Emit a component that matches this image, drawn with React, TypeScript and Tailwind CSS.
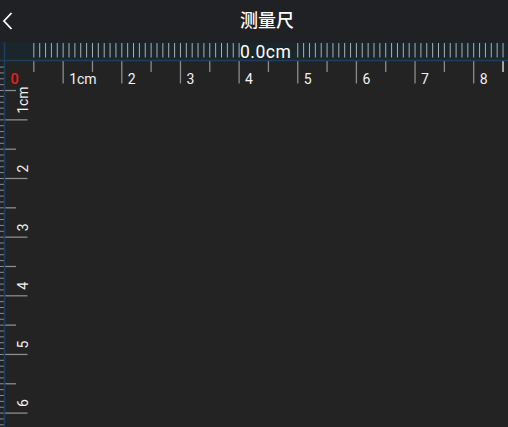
import React from 'react';

const CM = 58.65;
const OX = 4.5; // x of the zero line
const OY = 61.2; // y of the zero line
const W = 508;
const H = 427;

const font = 'Roboto, "Noto Sans CJK SC", sans-serif';

function Ruler() {
  const mmTop: number[] = [];
  for (let i = 5; OX + i * CM / 10 < W; i++) mmTop.push(OX + (i * CM) / 10);

  const mmLeft: number[] = [];
  for (let i = 1; OY + i * CM / 10 < H; i++) mmLeft.push(OY + (i * CM) / 10);

  const cmTop: number[] = [];
  for (let i = 1; OX + i * CM / 2 < W; i++) cmTop.push(i);
  const cmLeft: number[] = [];
  for (let i = 1; OY + i * CM / 2 < H; i++) cmLeft.push(i);

  return (
    <svg
      width={W}
      height={H - 42}
      viewBox={`0 42 ${W} ${H - 42}`}
      className="block"
      style={{ fontFamily: font }}
    >
      <rect x={0} y={42} width={W} height={H - 42} fill="#232323" />

      {/* top readout strip */}
      <rect x={0} y={42} width={W} height={19} fill="#1b262c" />
      {mmTop.map((x, i) => (
        <line key={i} x1={x} x2={x} y1={43} y2={57.5} stroke="#a9afb3" strokeWidth={1} />
      ))}
      <rect x={241} y={42} width={52} height={18} fill="#1b262c" />
      <text x={240} y={58} fontSize={17.5} fill="#ffffff" letterSpacing={0.5}>
        0.0cm
      </text>

      {/* left mm ticks */}
      <rect x={0} y={61} width={4} height={H - 61} fill="#1e2225" />
      {mmLeft.map((y, i) => (
        <line key={i} x1={0} x2={4} y1={y} y2={y} stroke="#8a8f93" strokeWidth={1} />
      ))}

      {/* horizontal cm ticks */}
      {cmTop.map((k) => {
        const x = OX + (k * CM) / 2;
        const major = k % 2 === 0;
        return (
          <g key={k}>
            <line
              x1={x}
              x2={x}
              y1={61}
              y2={major ? 83.5 : 72}
              stroke={x > 500 ? '#e8e8e8' : '#8c8c8c'}
              strokeWidth={1.3}
            />
            {major && (
              <text x={x + 6} y={83.5} fontSize={14} fill="#f2f2f2">
                {k === 2 ? '1cm' : k / 2}
              </text>
            )}
          </g>
        );
      })}

      {/* vertical cm ticks */}
      {cmLeft.map((k) => {
        const y = OY + (k * CM) / 2;
        const major = k % 2 === 0;
        return (
          <g key={k}>
            <line
              x1={5}
              x2={major ? 27.5 : 16}
              y1={y}
              y2={y}
              stroke="#8c8c8c"
              strokeWidth={1.3}
            />
            {major && (
              <text
                transform={`translate(27.5 ${y - 6}) rotate(-90)`}
                fontSize={14}
                fill="#f2f2f2"
              >
                {k === 2 ? '1cm' : k / 2}
              </text>
            )}
          </g>
        );
      })}

      <text x={10.5} y={83.5} fontSize={14.5} fontWeight={500} fill="#e8201c">
        0
      </text>

      {/* zero lines */}
      <line x1={0} x2={W} y1={60.5} y2={60.5} stroke="#1f3d5c" strokeWidth={1.5} />
      <line x1={4.5} x2={4.5} y1={42} y2={H} stroke="#1f3d5c" strokeWidth={1.5} />
    </svg>
  );
}

export default function App() {
  return (
    <div className="w-[508px] h-[427px] overflow-hidden bg-[#232323]" style={{ fontFamily: font }}>
      <header className="h-[42px] bg-[#202125] flex items-center">
        <button className="w-[16px] h-[42px] flex items-center justify-center">
          <svg width="16" height="18" viewBox="0 0 16 18">
            <polyline points="11.5,1 4,9 11.5,17" fill="none" stroke="#ffffff" strokeWidth={1.8} />
          </svg>
        </button>
        <h1 className="flex-1 text-center text-white text-[18px] font-medium pl-[10px] leading-none">
          测量尺
        </h1>
      </header>
      <Ruler />
    </div>
  );
}
